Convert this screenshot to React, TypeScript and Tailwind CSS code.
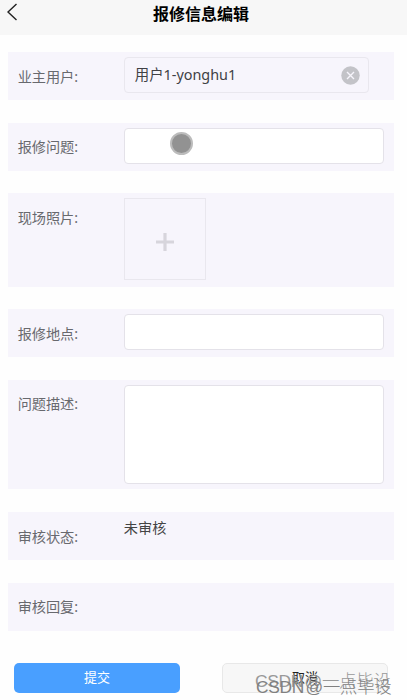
import type { ReactNode } from "react";

type FormRowProps = {
    label: string;
    className?: string;
    children?: ReactNode;
};

function FormRow({ label, className = "h-12", children }: FormRowProps) {
    return (
        <div className={`flex items-start bg-[#f7f5fc] pl-[9.4px] pr-[10px] pt-[5px] ${className}`}>
            <label className="w-[106px] shrink-0 pt-[9.6px] text-[14.2px] leading-5 tracking-[-0.1px] text-[#68696e]">
                {label}
            </label>
            {children}
        </div>
    );
}

export default function App() {
    return (
        <div className="relative h-[700px] w-[407px] overflow-hidden bg-[#fefefe] font-['Noto_Sans','Noto_Sans_CJK_SC',sans-serif]">
            <header className="relative flex h-[35px] items-center justify-center bg-[#f7f7f7] pb-[8px] pr-[5px]">
                <button className="absolute left-[7px] top-[3px]" aria-label="返回">
                    <svg width="11" height="18" viewBox="0 0 11 18" fill="none" stroke="#222" strokeWidth="1.4">
                        <path d="M9.5 1 1 9l8.5 8" />
                    </svg>
                </button>
                <h1 className="text-base font-bold leading-6 text-black">报修信息编辑</h1>
            </header>

            <form className="pt-[17px]">
                <div className="flex flex-col gap-[22.6px] pl-[8.4px] pr-[13.4px]">
                    <FormRow label="业主用户:">
                        <div className="flex h-9 w-[245px] items-center justify-between rounded-[4px] border border-[#e9e7ee] pl-[10px] pr-2">
                            <span className="text-[14.4px] leading-5 text-[#404145]">用户1-yonghu1</span>
                            <svg width="19" height="19" viewBox="0 0 19 19">
                                <circle cx="9.5" cy="9.5" r="9.2" fill="#c3c3c8" />
                                <path d="m6 6 7 7m0-7-7 7" stroke="#f7f5fc" strokeWidth="1.4" />
                            </svg>
                        </div>
                    </FormRow>

                    <FormRow label="报修问题:">
                        <div className="h-9 w-[260px] rounded-[4px] border border-[#e4e2e9] bg-white" />
                    </FormRow>

                    <FormRow label="现场照片:" className="h-[93.5px]">
                        <div className="flex size-[82px] items-center justify-center border border-[#e9e7ee] pt-[6px]">
                            <svg width="18" height="18" viewBox="0 0 18 18" stroke="#d7d5dc" strokeWidth="3.2">
                                <path d="M9 0v18M0 9h18" />
                            </svg>
                        </div>
                    </FormRow>

                    <FormRow label="报修地点:">
                        <div className="h-9 w-[260px] rounded-[4px] border border-[#e4e2e9] bg-white" />
                    </FormRow>

                    <FormRow label="问题描述:" className="h-[109.5px]">
                        <div className="h-[99px] w-[260px] rounded-[4px] border border-[#e4e2e9] bg-white" />
                    </FormRow>

                    <FormRow label="审核状态:">
                        <span className="pt-px text-[14.2px] leading-5 text-[#444]">未审核</span>
                    </FormRow>

                    <FormRow label="审核回复:" />
                </div>

                <div className="mt-8 flex justify-between pl-[14px] pr-[19px] text-[13px]">
                    <button type="button" className="h-[30px] w-[166px] rounded-[5px] bg-[#499fff] text-white">
                        提交
                    </button>
                    <button type="button" className="h-[30px] w-[166px] rounded-[5px] border border-[#e8e8e8] bg-[#f7f7f7] text-[#222]">
                        取消
                    </button>
                </div>
            </form>

            {/* Touch pointer */}
            <div className="absolute left-[170px] top-[132px] size-[23px] rounded-full border-2 border-[#bcbcbc] bg-[#929292]" />

            {/* Watermark, two overlapping passes */}
            <div className="pointer-events-none absolute left-[255px] top-[671px] whitespace-nowrap font-['Liberation_Sans','Noto_Sans_CJK_SC',sans-serif] text-[17.4px] font-light leading-5 tracking-[-0.3px] [word-spacing:-3px] text-[#999]">
                CSDN @一点毕设
            </div>
            <div className="pointer-events-none absolute left-[256px] top-[677px] whitespace-nowrap font-['Liberation_Sans','Noto_Sans_CJK_SC',sans-serif] text-[17.4px] font-light leading-5 tracking-[-0.3px] [word-spacing:-3px] text-[#808080]">
                CSDN @一点毕设
            </div>
        </div>
    );
}
